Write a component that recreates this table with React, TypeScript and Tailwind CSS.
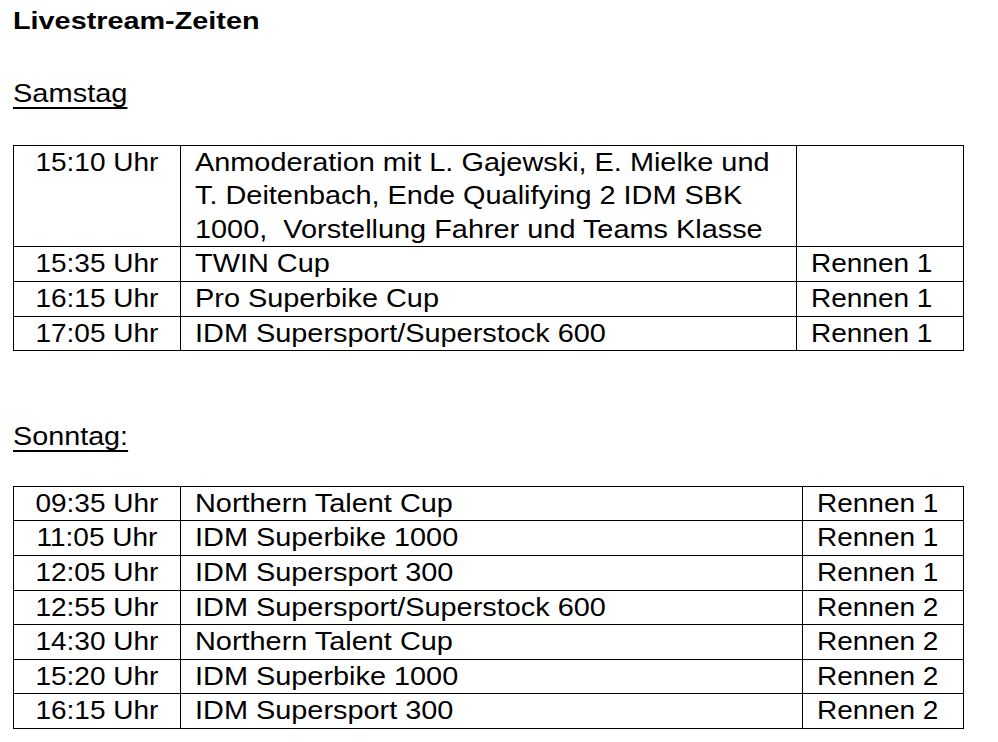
const samstag = [
  {
    time: "15:10 Uhr",
    lines: [
      "Anmoderation mit L. Gajewski, E. Mielke und",
      "T. Deitenbach, Ende Qualifying 2 IDM SBK",
      "1000,\u00a0 Vorstellung Fahrer und Teams Klasse",
    ],
    race: "",
  },
  { time: "15:35 Uhr", lines: ["TWIN Cup"], race: "Rennen 1" },
  { time: "16:15 Uhr", lines: ["Pro Superbike Cup"], race: "Rennen 1" },
  { time: "17:05 Uhr", lines: ["IDM Supersport/Superstock 600"], race: "Rennen 1" },
];

const sonntag = [
  { time: "09:35 Uhr", lines: ["Northern Talent Cup"], race: "Rennen 1" },
  { time: "11:05 Uhr", lines: ["IDM Superbike 1000"], race: "Rennen 1" },
  { time: "12:05 Uhr", lines: ["IDM Supersport 300"], race: "Rennen 1" },
  { time: "12:55 Uhr", lines: ["IDM Supersport/Superstock 600"], race: "Rennen 2" },
  { time: "14:30 Uhr", lines: ["Northern Talent Cup"], race: "Rennen 2" },
  { time: "15:20 Uhr", lines: ["IDM Superbike 1000"], race: "Rennen 2" },
  { time: "16:15 Uhr", lines: ["IDM Supersport 300"], race: "Rennen 2" },
];

type Row = { time: string; lines: string[]; race: string };

// the source is a stretched document scan, so glyphs are widened a little
const wideCenter = "inline-block whitespace-nowrap origin-center scale-x-[1.12]";
const wideLeft = "inline-block whitespace-nowrap origin-left scale-x-[1.12]";
const wideEvent = "inline-block whitespace-nowrap origin-left scale-x-[1.155]";

function Schedule({ rows, raceCol }: { rows: Row[]; raceCol: string }) {
  return (
    <table className="table-fixed border-collapse border border-black w-[951px]">
      <colgroup>
        <col className="w-[167px]" />
        <col />
        <col className={raceCol} />
      </colgroup>
      <tbody>
        {rows.map((row, i) => (
          <tr key={i}>
            <td className="border border-black p-0 text-center align-top">
              <span className={wideCenter}>{row.time}</span>
            </td>
            <td className="border border-black p-0 pl-[14px] align-top">
              {row.lines.map((line, j) => (
                <div key={j}>
                  <span className={wideEvent}>{line}</span>
                </div>
              ))}
            </td>
            <td className="border border-black p-0 pl-[14px] align-top">
              {row.race && <span className={wideLeft}>{row.race}</span>}
            </td>
          </tr>
        ))}
      </tbody>
    </table>
  );
}

export default function App() {
  return (
    <div className="min-h-[742px] bg-white px-[13px] pt-1 text-black font-['Liberation_Sans',Arial,sans-serif] text-[25px] leading-[33.6px]">
      <h1 className="text-[24px] font-bold leading-[34px]">
        <span className="inline-block origin-left scale-x-[1.2]">Livestream-Zeiten</span>
      </h1>

      <div className="mt-[39px]">
        <span className="inline-block origin-left scale-x-[1.16] underline decoration-2 underline-offset-[5px]">Samstag</span>
      </div>
      <div className="mt-[34px]">
        <Schedule rows={samstag} raceCol="w-[167px]" />
      </div>

      <div className="mt-[69px]">
        <span className="inline-block origin-left scale-x-[1.15] underline decoration-2 underline-offset-[5px]">Sonntag:</span>
      </div>
      <div className="mt-[32px]">
        <Schedule rows={sonntag} raceCol="w-[161px]" />
      </div>
    </div>
  );
}
